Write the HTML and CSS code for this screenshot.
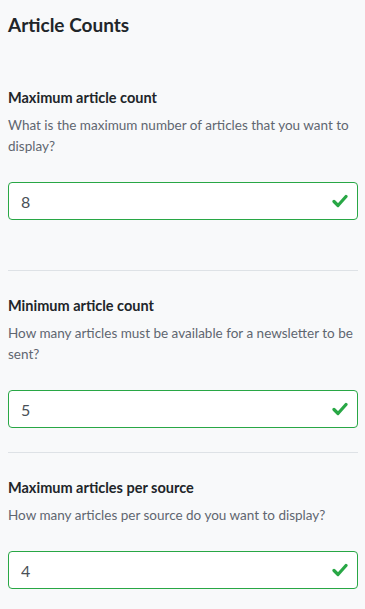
FILE: index.html
```html
<!DOCTYPE html>
<html lang="en">
  <head>
    <meta charset="UTF-8" />
    <meta name="viewport" content="width=device-width, initial-scale=1.0" />
    <title>Article Counts</title>
    <link rel="stylesheet" href="styles.css">
  </head>
  <body>
    <div class="page">
      <h2 class="title">Article Counts</h2>

      <div class="setting setting-first">
        <label class="setting-label" for="max-count">Maximum article count</label>
        <p class="setting-help">What is the maximum number of articles that you want to display?</p>
        <div class="field">
          <input type="text" id="max-count" class="field-input" value="8" />
          <svg class="field-check" width="16" height="14" viewBox="0 0 16 14">
            <path d="M2 7.5 L6 11.5 L14 2.5" fill="none" stroke="#28a745" stroke-width="3.2" stroke-linecap="round" stroke-linejoin="round" />
          </svg>
        </div>
      </div>

      <hr class="divider" />

      <div class="setting">
        <label class="setting-label" for="min-count">Minimum article count</label>
        <p class="setting-help">How many articles must be available for a newsletter to be sent?</p>
        <div class="field">
          <input type="text" id="min-count" class="field-input" value="5" />
          <svg class="field-check" width="16" height="14" viewBox="0 0 16 14">
            <path d="M2 7.5 L6 11.5 L14 2.5" fill="none" stroke="#28a745" stroke-width="3.2" stroke-linecap="round" stroke-linejoin="round" />
          </svg>
        </div>
      </div>

      <hr class="divider" />

      <div class="setting">
        <label class="setting-label" for="per-source">Maximum articles per source</label>
        <p class="setting-help">How many articles per source do you want to display?</p>
        <div class="field">
          <input type="text" id="per-source" class="field-input" value="4" />
          <svg class="field-check" width="16" height="14" viewBox="0 0 16 14">
            <path d="M2 7.5 L6 11.5 L14 2.5" fill="none" stroke="#28a745" stroke-width="3.2" stroke-linecap="round" stroke-linejoin="round" />
          </svg>
        </div>
      </div>
    </div>
  </body>
</html>
```

FILE: styles.css
```css
body {
  margin: 0;
  background-color: #f8f9fa;
  font-family: Lato, "Open Sans", Arial, sans-serif;
  color: #212529;
}

.page {
  padding: 0 7px 0 8px;
}

.title {
  margin: 12px 0 0;
  font-size: 19px;
  line-height: 26px;
  font-weight: 700;
}

.setting {
  padding-top: 25px;
}

.setting-first {
  padding-top: 50px;
  padding-bottom: 26px;
}

.setting-label {
  display: block;
  font-size: 14.5px;
  line-height: 20px;
  font-weight: 700;
}

.setting-help {
  margin: 7px 0 0;
  font-size: 13.5px;
  line-height: 21px;
  color: #5f6670;
}

.field {
  position: relative;
  margin-top: 25px;
}

.field-input {
  display: block;
  box-sizing: border-box;
  width: 100%;
  height: 38px;
  padding: 0 40px 0 12px;
  border: 1px solid #28a745;
  border-radius: 4px;
  background-color: white;
  font-family: Lato, "Open Sans", Arial, sans-serif;
  font-size: 16px;
  color: #495057;
}

.field-check {
  position: absolute;
  top: 12px;
  right: 10px;
}

.divider {
  margin: 24px 0 0;
  border: none;
  border-top: 1px solid #dee2e6;
}
```
